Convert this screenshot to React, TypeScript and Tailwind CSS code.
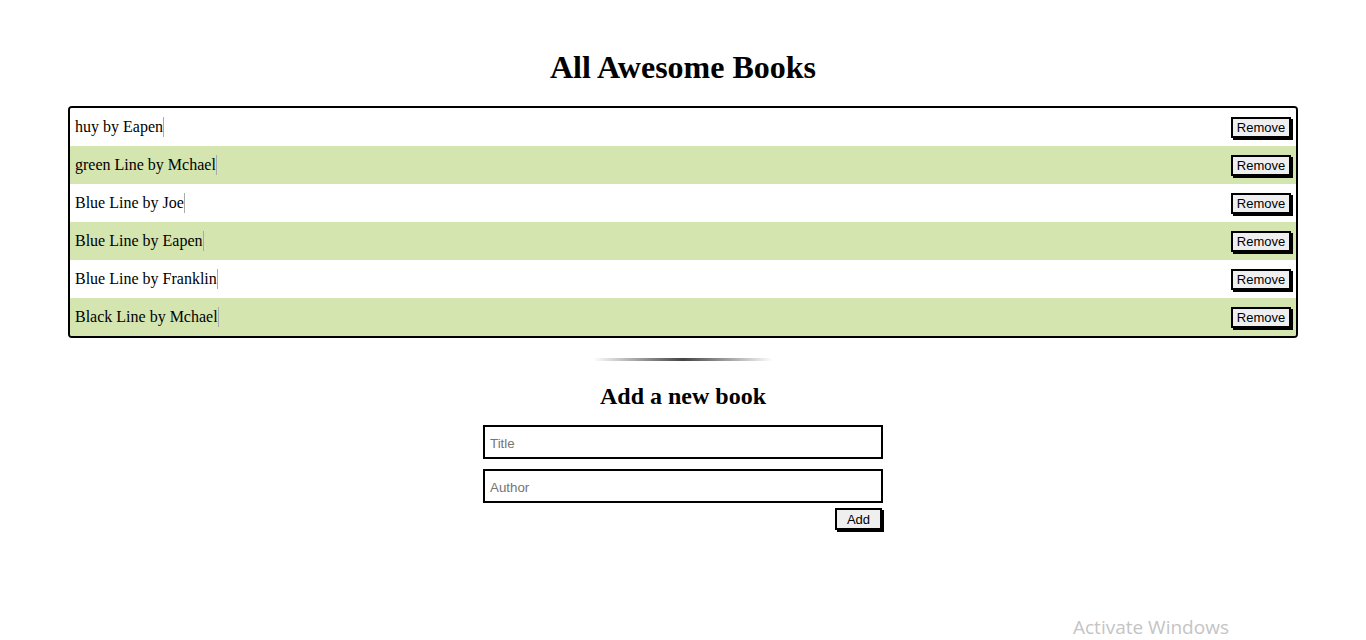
import React from "react";

const books = [
  { title: "huy", author: "Eapen" },
  { title: "green Line", author: "Mchael" },
  { title: "Blue Line", author: "Joe" },
  { title: "Blue Line", author: "Eapen" },
  { title: "Blue Line", author: "Franklin" },
  { title: "Black Line", author: "Mchael" },
];

export default function App() {
  return (
    <div className="relative min-h-[640px] bg-white font-['Liberation_Serif',serif] text-black">
      <h1 className="pt-[49px] text-center text-[32px] font-bold leading-[37px]">All Awesome Books</h1>

      {/* Book list */}
      <ul className="mx-[68px] mt-[20px] overflow-hidden rounded-[4px] border-2 border-black">
        {books.map((b, i) => (
          <li
            key={i}
            className={`flex h-[38px] items-center justify-between pl-[5px] pr-[5px] ${i % 2 === 1 ? "bg-[#d4e5b0]" : "bg-white"}`}
          >
            <span className="border-r border-[#aaaaaa] text-[16px] leading-[20px]">
              {b.title} by {b.author}
            </span>
            <button className="h-[21px] w-[60px] border-2 border-black bg-[#efefef] font-['Liberation_Sans',sans-serif] text-[13px] leading-none shadow-[2px_2px_0_#000]">
              Remove
            </button>
          </li>
        ))}
      </ul>

      {/* Divider */}
      <div className="mx-auto mt-[20px] h-[3px] w-[180px] bg-[linear-gradient(to_right,transparent,#444_50%,transparent)]" />

      <h2 className="mt-[21px] text-center text-[24px] font-bold leading-[28px]">Add a new book</h2>

      {/* Form */}
      <form className="mx-auto mt-[15px] flex w-[400px] flex-col items-end" onSubmit={(e) => e.preventDefault()}>
        <input
          placeholder="Title"
          className="h-[34px] w-full border-2 border-black px-[5px] pt-[3px] font-['Liberation_Sans',sans-serif] text-[13.33px] outline-none placeholder:text-[#757575]"
        />
        <input
          placeholder="Author"
          className="mt-[10px] h-[34px] w-full border-2 border-black px-[5px] pt-[3px] font-['Liberation_Sans',sans-serif] text-[13.33px] outline-none placeholder:text-[#757575]"
        />
        <button className="mr-[1px] mt-[5px] h-[22px] w-[47px] border-2 border-black bg-[#efefef] font-['Liberation_Sans',sans-serif] text-[13px] leading-none shadow-[2px_2px_0_#000]">
          Add
        </button>
      </form>

      <div className="absolute left-[1073px] top-[615px] font-['Open_Sans',sans-serif] text-[19px] leading-[24px] text-[#c4c4c4]">
        Activate Windows
      </div>
    </div>
  );
}
